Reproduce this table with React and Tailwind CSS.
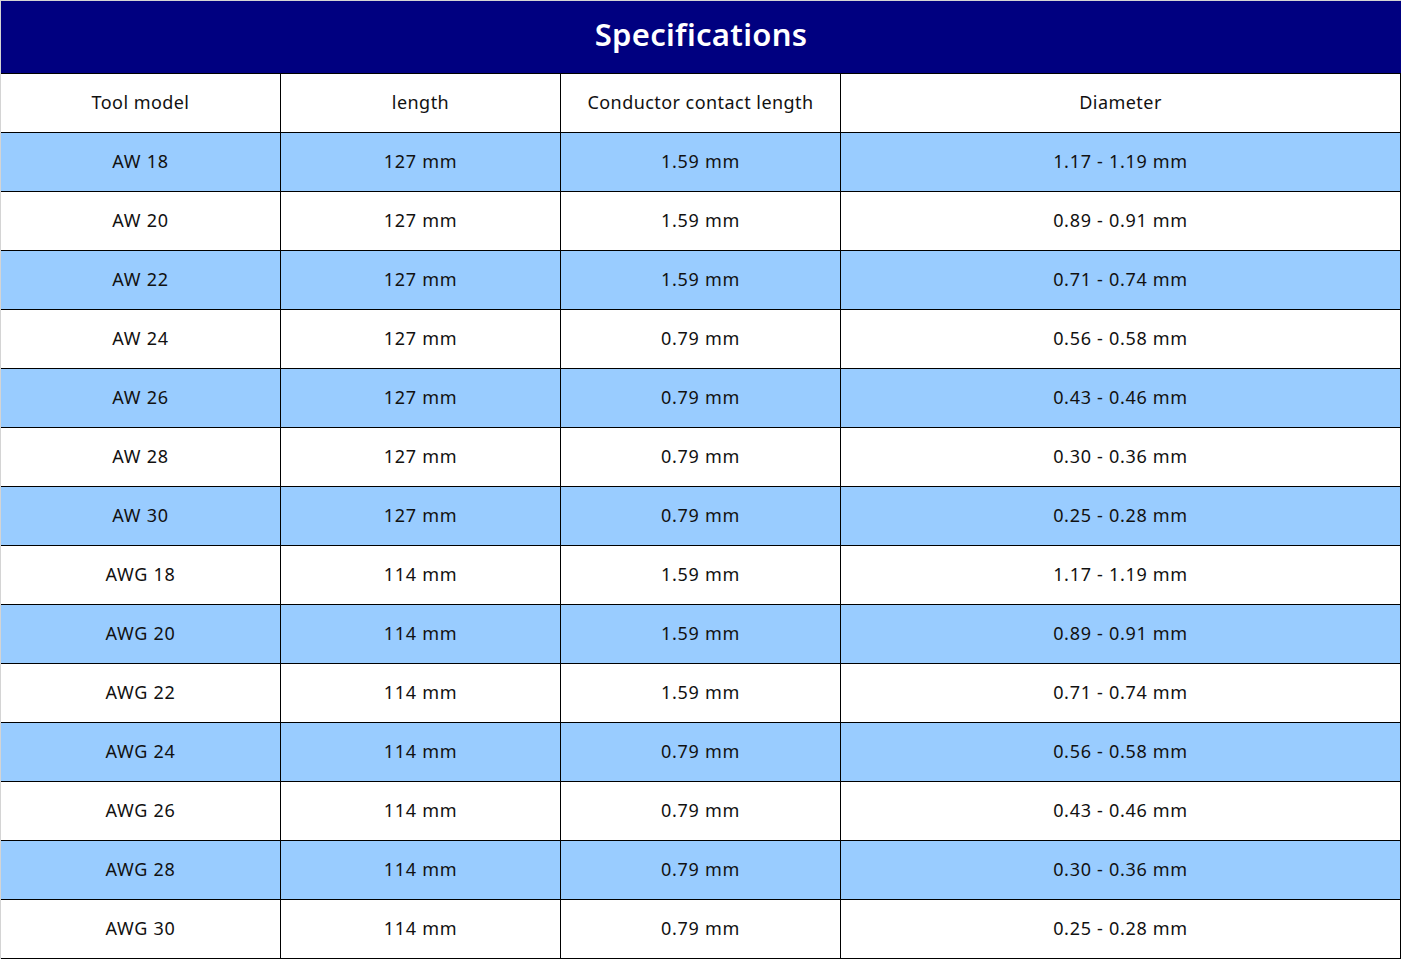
import React from 'react'

const rows = [
  ['AW 18', '127 mm', '1.59 mm', '1.17 - 1.19 mm'],
  ['AW 20', '127 mm', '1.59 mm', '0.89 - 0.91 mm'],
  ['AW 22', '127 mm', '1.59 mm', '0.71 - 0.74 mm'],
  ['AW 24', '127 mm', '0.79 mm', '0.56 - 0.58 mm'],
  ['AW 26', '127 mm', '0.79 mm', '0.43 - 0.46 mm'],
  ['AW 28', '127 mm', '0.79 mm', '0.30 - 0.36 mm'],
  ['AW 30', '127 mm', '0.79 mm', '0.25 - 0.28 mm'],
  ['AWG 18', '114 mm', '1.59 mm', '1.17 - 1.19 mm'],
  ['AWG 20', '114 mm', '1.59 mm', '0.89 - 0.91 mm'],
  ['AWG 22', '114 mm', '1.59 mm', '0.71 - 0.74 mm'],
  ['AWG 24', '114 mm', '0.79 mm', '0.56 - 0.58 mm'],
  ['AWG 26', '114 mm', '0.79 mm', '0.43 - 0.46 mm'],
  ['AWG 28', '114 mm', '0.79 mm', '0.30 - 0.36 mm'],
  ['AWG 30', '114 mm', '0.79 mm', '0.25 - 0.28 mm'],
]

const headers = ['Tool model', 'length', 'Conductor contact length', 'Diameter']

export default function App() {
  return (
    <div className="w-[1401px] h-[959px] bg-[#d4d4d4] pt-px pl-px font-['Noto_Sans',sans-serif] text-[#111]">
      <div className="w-[1400px] bg-white">
        <div className="h-[73px] bg-[#000080] border-b border-black flex items-center justify-center pb-[6px]">
          <h1 className="text-white text-[31px] font-semibold tracking-[0.3px]">Specifications</h1>
        </div>
        <div className="grid grid-cols-[280px_280px_280px_560px]">
          {headers.map((h) => (
            <div key={h} className="h-[59px] border-r border-b border-black flex items-center justify-center pb-[2px] text-[18px] tracking-[0.45px] bg-white">
              {h}
            </div>
          ))}
          {rows.map((r, i) =>
            r.map((c, j) => (
              <div
                key={i + '-' + j}
                className={
                  'h-[59px] border-r border-b border-black flex items-center justify-center pb-[2px] text-[18px] tracking-[0.7px] ' +
                  (i % 2 === 0 ? 'bg-[#99ccff]' : 'bg-white')
                }
              >
                {c}
              </div>
            ))
          )}
        </div>
      </div>
    </div>
  )
}
